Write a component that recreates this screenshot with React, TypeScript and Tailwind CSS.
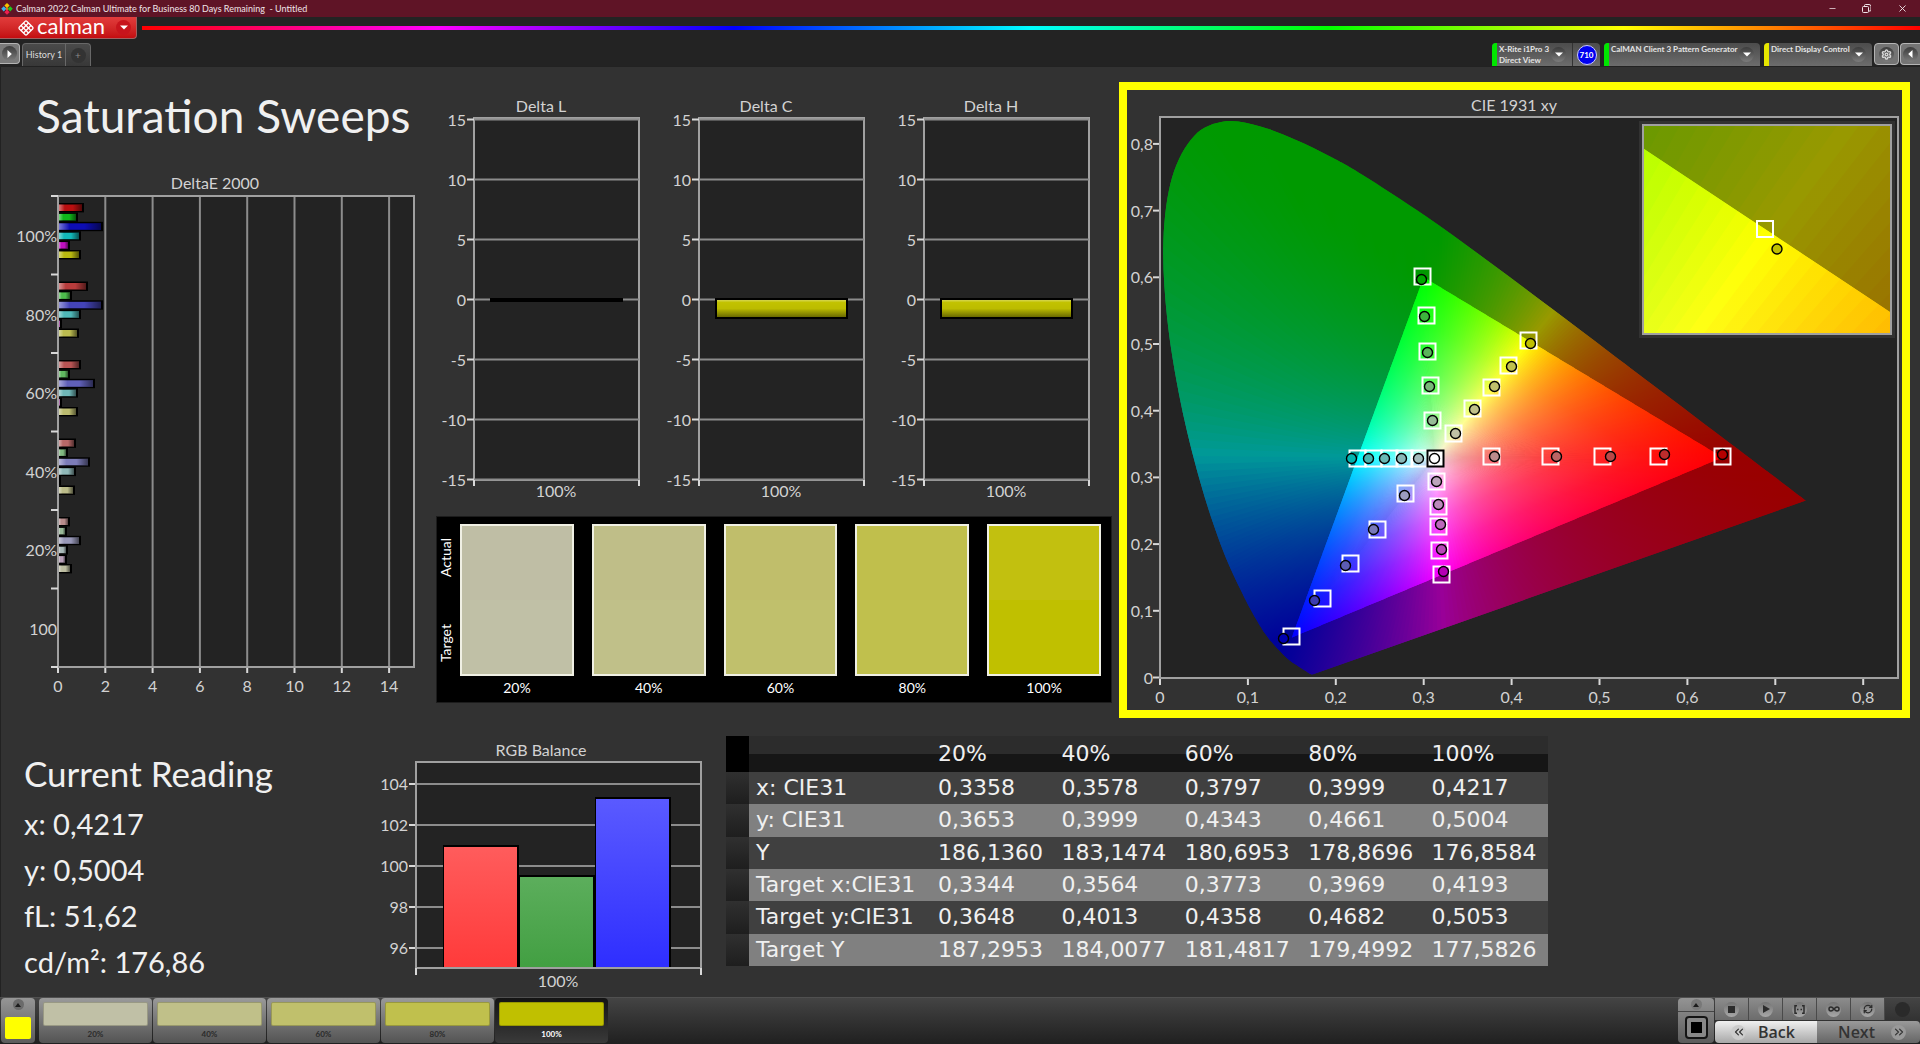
import { ChevronsLeft, ChevronsRight, Infinity as InfinityIcon, Minus, RefreshCw, Settings, X } from "lucide-react";
import { useId, useMemo } from "react";
import type { ReactNode } from "react";

type Point = [number, number];

const LEVELS = ["20%", "40%", "60%", "80%", "100%"];
const SWATCHES = ["#c0c0a6", "#c0c089", "#c0c06c", "#c0c04d", "#c0c000"];
const MEASURED = ["#bfbea5", "#bfbe88", "#c0be6b", "#c0bf4c", "#c2c00f"];

const TABLE_ROWS = [
  { label: "x: CIE31", values: ["0,3358", "0,3578", "0,3797", "0,3999", "0,4217"] },
  { label: "y: CIE31", values: ["0,3653", "0,3999", "0,4343", "0,4661", "0,5004"] },
  { label: "Y", values: ["186,1360", "183,1474", "180,6953", "178,8696", "176,8584"] },
  { label: "Target x:CIE31", values: ["0,3344", "0,3564", "0,3773", "0,3969", "0,4193"] },
  { label: "Target y:CIE31", values: ["0,3648", "0,4013", "0,4358", "0,4682", "0,5053"] },
  { label: "Target Y", values: ["187,2953", "184,0077", "181,4817", "179,4992", "177,5826"] },
];

const DELTA_E = [
  {
    label: "100%",
    widths: [25, 19, 44, 22, 11, 22],
    colors: ["#b80f10", "#0fb81a", "#0d0db4", "#12b8b8", "#c010c0", "#b8b810"],
  },
  {
    label: "80%",
    widths: [29, 13, 44, 22, 3, 20],
    colors: ["#b83c3c", "#4cbc4c", "#4444b8", "#50b8b8", "#b060b0", "#bcbc50"],
  },
  {
    label: "60%",
    widths: [22, 11, 36, 19, 3, 19],
    colors: ["#b85454", "#60b860", "#6060b8", "#70b8b8", "#b070b0", "#bcbc70"],
  },
  {
    label: "40%",
    widths: [17, 9, 31, 17, 2, 16],
    colors: ["#b86868", "#80b880", "#7c7cb8", "#90b8b8", "#000000", "#bcbc8a"],
  },
  {
    label: "20%",
    widths: [11, 8, 22, 9, 8, 13],
    colors: ["#b88c8c", "#98b898", "#9898b8", "#a8b8b8", "#b8a0b8", "#bcbca0"],
  },
];

/* ---------- Chromaticity maths ---------- */

const WHITE: Point = [0.3127, 0.329];
const RED: Point = [0.64, 0.33];
const GREEN: Point = [0.3, 0.6];
const BLUE: Point = [0.15, 0.06];

const LOCUS: Point[] = [
  [0.1741, 0.005], [0.1714, 0.0051], [0.1644, 0.0109], [0.1566, 0.0177], [0.144, 0.0297],
  [0.1241, 0.0578], [0.1096, 0.0868], [0.0913, 0.1327], [0.0687, 0.2007], [0.0454, 0.295],
  [0.0235, 0.4127], [0.0082, 0.5384], [0.0039, 0.6548], [0.0139, 0.7502], [0.0389, 0.812],
  [0.0743, 0.8338], [0.1142, 0.8262], [0.1547, 0.8059], [0.1929, 0.7816], [0.2296, 0.7543],
  [0.3016, 0.6923], [0.3731, 0.6245], [0.4441, 0.5547], [0.5125, 0.4866], [0.5752, 0.4242],
  [0.627, 0.3725], [0.6658, 0.334], [0.6915, 0.3083], [0.719, 0.2809], [0.7347, 0.2653],
];

const toPlot = ([x, y]: Point): Point => [1160 + x * 879, 677.5 - y * 667];

const mix = (a: Point, b: Point, t: number): Point => [a[0] + (b[0] - a[0]) * t, a[1] + (b[1] - a[1]) * t];

const xyToColor = ([x, y]: Point, level = 1) => {
  const z = 1 - x - y;
  const rgb = [
    3.2406 * x - 1.5372 * y - 0.4986 * z,
    -0.9689 * x + 1.8758 * y + 0.0415 * z,
    0.0557 * x - 0.204 * y + 1.057 * z,
  ].map((v) => Math.max(0, v));
  const peak = Math.max(...rgb, 0.0001);
  return `rgb(${rgb.map((v) => Math.round((255 * level * v) / peak)).join(",")})`;
};

const locusPath = () => {
  const pts = LOCUS.map(toPlot);
  let d = `M${pts[0].join(" ")}`;
  for (let i = 0; i < pts.length - 1; i++) {
    const p0 = pts[Math.max(0, i - 1)];
    const p1 = pts[i];
    const p2 = pts[i + 1];
    const p3 = pts[Math.min(pts.length - 1, i + 2)];
    d += `C${p1[0] + (p2[0] - p0[0]) / 6} ${p1[1] + (p2[1] - p0[1]) / 6} ${p2[0] - (p3[0] - p1[0]) / 6} ${
      p2[1] - (p3[1] - p1[1]) / 6
    } ${p2[0]} ${p2[1]}`;
  }
  return `${d}Z`;
};

const EDGE_STEPS = 140;
const REACH = 5;
const INNER_STOPS = [0, 0.1, 0.2, 0.35, 0.5, 0.75, 1];
const OUTER_STOPS = [1, 1.25, 1.5, 1.75, 2, 2.5, 3, 4, 5];

const buildWedges = () => {
  const ring: Point[] = [];
  const corners = [GREEN, RED, BLUE];
  corners.forEach((corner, i) => {
    const next = corners[(i + 1) % 3];
    for (let s = 0; s < EDGE_STEPS; s++) ring.push(mix(corner, next, s / EDGE_STEPS));
  });
  // each wedge reaches over the next one, so that no seams show
  return ring.map((p, i) => ({
    edge: [p, ring[(i + 1) % ring.length], ring[(i + 2) % ring.length]],
    inner: INNER_STOPS.map((t) => ({ offset: t, color: xyToColor(mix(WHITE, p, t)) })),
    outer: OUTER_STOPS.map((t) => ({ offset: t / REACH, color: xyToColor(mix(WHITE, p, t), 0.6) })),
  }));
};

/* ---------- Marker positions on the CIE chart ---------- */

const TARGETS: Point[] = [
  [1422, 276], [1426, 315], [1427, 351], [1430, 385], [1432, 420],
  [1528, 340], [1508, 365], [1491, 387], [1472, 408], [1453, 433],
  [1357, 458], [1373, 458], [1389, 458], [1404, 458], [1419, 458],
  [1491, 456], [1550, 456], [1602, 456], [1658, 456], [1722, 456],
  [1436, 481], [1438, 506], [1438, 526], [1439, 550], [1441, 574],
  [1405, 493], [1377, 529], [1350, 563], [1322, 598], [1291, 636],
];

const READINGS: { at: Point; fill: string }[] = [
  { at: [1421, 279], fill: "#00a800" }, { at: [1424, 316], fill: "#3cb43c" }, { at: [1427, 352], fill: "#5ab45a" },
  { at: [1429, 386], fill: "#78b878" }, { at: [1432, 420], fill: "#96bc96" },
  { at: [1530, 343], fill: "#c0c000" }, { at: [1511, 366], fill: "#c0c04d" }, { at: [1494, 386], fill: "#c0c06c" },
  { at: [1474, 409], fill: "#c0c089" }, { at: [1455, 433], fill: "#c0c0a6" },
  { at: [1351, 458], fill: "#00b4b0" }, { at: [1368, 458], fill: "#48b4b0" }, { at: [1384, 458], fill: "#68b8b4" },
  { at: [1401, 458], fill: "#88b8b8" }, { at: [1418, 458], fill: "#a4bcbc" },
  { at: [1434, 458], fill: "#ffffff" },
  { at: [1494, 456], fill: "#bc8c8c" }, { at: [1556, 456], fill: "#bc6464" }, { at: [1610, 456], fill: "#bc4848" },
  { at: [1664, 454], fill: "#bc2c2c" }, { at: [1722, 454], fill: "#b40000" },
  { at: [1436, 481], fill: "#bca4bc" }, { at: [1438, 504], fill: "#bc88bc" }, { at: [1440, 524], fill: "#bc68bc" },
  { at: [1441, 549], fill: "#b848b8" }, { at: [1443, 571], fill: "#b400b4" },
  { at: [1404, 495], fill: "#9c9cc0" }, { at: [1373, 529], fill: "#7878b8" }, { at: [1345, 565], fill: "#5c5cb4" },
  { at: [1314, 600], fill: "#3c3cb0" }, { at: [1283, 638], fill: "#0000b0" },
];

/* ---------- Charts ---------- */

const LABEL = "fill-[#d2d2d2] text-[16px]";

function DeltaEChart() {
  const shade = useId();
  const top = 196;
  const step = 78.5;
  return (
    <svg viewBox="0 143 429 567" className="block w-full" role="img" aria-label="DeltaE 2000">
      <defs>
        <linearGradient id={shade}>
          <stop offset="0" stopColor="#fff" stopOpacity="0.45" />
          <stop offset="0.25" stopColor="#fff" stopOpacity="0" />
          <stop offset="0.6" stopColor="#000" stopOpacity="0" />
          <stop offset="1" stopColor="#000" stopOpacity="0.55" />
        </linearGradient>
      </defs>
      <text x="215" y="189" textAnchor="middle" className={LABEL}>
        DeltaE 2000
      </text>
      <rect x="58" y={top} width="356" height="471" fill="#232323" />
      {[2, 4, 6, 8, 10, 12, 14].map((v) => (
        <line key={v} x1={58 + v * 23.65} x2={58 + v * 23.65} y1={top} y2="667" stroke="#8c8c8c" strokeWidth="2" />
      ))}
      {[0, 2, 4, 6, 8, 10, 12, 14].map((v) => (
        <g key={v}>
          <line x1={58 + v * 23.65} x2={58 + v * 23.65} y1="667" y2="673" stroke="#d8d8d8" strokeWidth="2" />
          <text x={58 + v * 23.65} y="692" textAnchor="middle" className={LABEL}>
            {v}
          </text>
        </g>
      ))}
      <rect x="58" y={top} width="356" height="471" fill="none" stroke="#a0a0a0" strokeWidth="2" />
      {[0, 1, 2, 3, 4, 5, 6].map((i) => (
        <line key={i} x1="51" x2="58" y1={top + i * step} y2={top + i * step} stroke="#d8d8d8" strokeWidth="2" />
      ))}
      {DELTA_E.map((group, g) => (
        <g key={group.label}>
          <text x="57" y={top + g * step + 46} textAnchor="end" className={LABEL}>
            {group.label}
          </text>
          {group.widths.map((w, i) => {
            const y = top + g * step + 7 + i * 9.4;
            return (
              <g key={i}>
                <rect x="59" y={y} width={w} height="9.4" fill="#000" />
                <rect x="59" y={y + 1.5} width={Math.max(1, w - 2)} height="6.5" fill={group.colors[i]} />
                <rect x="59" y={y + 1.5} width={Math.max(1, w - 2)} height="6.5" fill={`url(#${shade})`} />
              </g>
            );
          })}
        </g>
      ))}
      <text x="57" y={top + 5 * step + 46} textAnchor="end" className={LABEL}>
        100
      </text>
    </svg>
  );
}

function DeltaChart({ title, value }: { title: string; value: number }) {
  const shade = useId();
  const yOf = (v: number) => 299.5 - v * 12;
  return (
    <svg viewBox="0 90 225 415" className="block w-full" role="img" aria-label={title}>
      <defs>
        <linearGradient id={shade} x2="0" y2="1">
          <stop offset="0" stopColor="#d6d650" />
          <stop offset="0.15" stopColor="#c2c200" />
          <stop offset="0.5" stopColor="#bcbc00" />
          <stop offset="1" stopColor="#6a6a00" />
        </linearGradient>
      </defs>
      <text x="112" y="112" textAnchor="middle" className={LABEL}>
        {title}
      </text>
      <rect x="45" y="118" width="165" height="362" fill="#232323" stroke="#a0a0a0" strokeWidth="2" />
      {[15, 10, 5, 0, -5, -10, -15].map((v) => (
        <g key={v}>
          <line x1="45" x2="210" y1={yOf(v)} y2={yOf(v)} stroke="#8c8c8c" strokeWidth="2" />
          <line x1="38" x2="45" y1={yOf(v)} y2={yOf(v)} stroke="#d8d8d8" strokeWidth="2" />
          <text x="37" y={yOf(v) + 6} textAnchor="end" className={LABEL}>
            {v}
          </text>
        </g>
      ))}
      <line x1="45" x2="45" y1="480" y2="486" stroke="#d8d8d8" strokeWidth="2" />
      <line x1="210" x2="210" y1="480" y2="486" stroke="#d8d8d8" strokeWidth="2" />
      <rect x="61" y="298" width="133" height={Math.max(4, -value * 14)} fill="#000" />
      {value < 0 && <rect x="63" y="300" width="129" height={-value * 14 - 4} fill={`url(#${shade})`} />}
      <text x="127" y="497" textAnchor="middle" className={LABEL}>
        100%
      </text>
    </svg>
  );
}

function RgbBalanceChart() {
  const id = useId();
  const bars = [
    { x: 443, y: 845, from: "#ff5c5c", to: "#ff3a3a" },
    { x: 519, y: 875, from: "#5cae5c", to: "#429f42" },
    { x: 595, y: 797, from: "#5a5aff", to: "#2e2eff" },
  ];
  return (
    <svg viewBox="380 735 345 262" className="block w-full" role="img" aria-label="RGB Balance">
      <defs>
        {bars.map((bar, i) => (
          <linearGradient key={i} id={`${id}${i}`} x2="0" y2="1">
            <stop offset="0" stopColor={bar.from} />
            <stop offset="1" stopColor={bar.to} />
          </linearGradient>
        ))}
      </defs>
      <text x="541" y="756" textAnchor="middle" className={LABEL}>
        RGB Balance
      </text>
      <rect x="416" y="762" width="285" height="206" fill="#232323" />
      {[104, 102, 100, 98, 96].map((v, i) => (
        <g key={v}>
          <line x1="416" x2="701" y1={784 + i * 41} y2={784 + i * 41} stroke="#8c8c8c" strokeWidth="2" />
          <line x1="409" x2="416" y1={784 + i * 41} y2={784 + i * 41} stroke="#d8d8d8" strokeWidth="2" />
          <text x="408" y={790 + i * 41} textAnchor="end" className={LABEL}>
            {v}
          </text>
        </g>
      ))}
      {bars.map((bar, i) => (
        <g key={i}>
          <rect x={bar.x} y={bar.y} width="76" height={968 - bar.y} fill="#000" />
          <rect x={bar.x + 1} y={bar.y + 2} width="73" height={966 - bar.y} fill={`url(#${id}${i})`} />
        </g>
      ))}
      <rect x="416" y="762" width="285" height="206" fill="none" stroke="#a0a0a0" strokeWidth="2" />
      <line x1="416" x2="416" y1="968" y2="975" stroke="#d8d8d8" strokeWidth="2" />
      <line x1="701" x2="701" y1="968" y2="975" stroke="#d8d8d8" strokeWidth="2" />
      <text x="558" y="987" textAnchor="middle" className={LABEL}>
        100%
      </text>
    </svg>
  );
}

function CieChart() {
  const wedges = useMemo(buildWedges, []);
  const locus = useMemo(locusPath, []);
  const [wx, wy] = toPlot(WHITE);
  const ticks = [0, 1, 2, 3, 4, 5, 6, 7, 8];
  const [tx, ty] = toPlot([0.4193, 0.5053]);

  return (
    <svg viewBox="1127 90 775 620" className="block w-full" role="img" aria-label="CIE 1931 xy">
      <defs>
        {wedges.map((w, i) => {
          const [x2, y2] = toPlot(w.edge[0]);
          const [fx, fy] = toPlot(mix(WHITE, w.edge[0], REACH));
          return (
            <g key={i}>
              <linearGradient id={`in${i}`} gradientUnits="userSpaceOnUse" x1={wx} y1={wy} x2={x2} y2={y2}>
                {w.inner.map((s) => (
                  <stop key={s.offset} offset={s.offset} stopColor={s.color} />
                ))}
              </linearGradient>
              <linearGradient id={`out${i}`} gradientUnits="userSpaceOnUse" x1={wx} y1={wy} x2={fx} y2={fy}>
                {w.outer.map((s) => (
                  <stop key={s.offset} offset={s.offset} stopColor={s.color} />
                ))}
              </linearGradient>
            </g>
          );
        })}
        <clipPath id="locus">
          <path d={locus} />
        </clipPath>
        <clipPath id="inset">
          <rect x="1643" y="125" width="248" height="209" />
        </clipPath>
        <g id="diagram">
          {wedges.map((w, i) => {
            const far = w.edge.map((p) => toPlot(mix(WHITE, p, REACH)).join(","));
            return <polygon key={i} points={`${wx},${wy} ${far.join(" ")}`} fill={`url(#out${i})`} />;
          })}
          {wedges.map((w, i) => (
            <polygon
              key={i}
              points={`${wx},${wy} ${w.edge.map((p) => toPlot(p).join(",")).join(" ")}`}
              fill={`url(#in${i})`}
            />
          ))}
        </g>
      </defs>
      <text x="1514" y="111" textAnchor="middle" className={LABEL}>
        CIE 1931 xy
      </text>
      <rect x="1160" y="117" width="738" height="561" fill="#232323" stroke="#a0a0a0" strokeWidth="2" />
      {ticks.map((t) => {
        const [x] = toPlot([t / 10, 0]);
        const [, y] = toPlot([0, t / 10]);
        const label = t === 0 ? "0" : `0,${t}`;
        return (
          <g key={t}>
            <line x1={x} x2={x} y1="679" y2="685" stroke="#d8d8d8" strokeWidth="2" />
            <line x1="1153" x2="1159" y1={y} y2={y} stroke="#d8d8d8" strokeWidth="2" />
            <text x={x} y="703" textAnchor="middle" className={LABEL}>
              {label}
            </text>
            <text x="1153" y={y + 6} textAnchor="end" className={LABEL}>
              {label}
            </text>
          </g>
        );
      })}
      <g clipPath="url(#locus)">
        <use href="#diagram" />
      </g>
      <g transform="translate(0.5 0.5)">
        {TARGETS.map(([x, y]) => (
          <rect key={`${x}-${y}`} x={x - 8} y={y - 8} width="16" height="16" fill="none" stroke="#fff" strokeWidth="2" />
        ))}
        <rect x="1427" y="450" width="16" height="16" fill="#fff" stroke="#000" strokeWidth="2" />
        {READINGS.map(({ at: [x, y], fill }) => (
          <circle key={`${x}-${y}`} cx={x} cy={y} r="5" fill={fill} stroke="#000" strokeWidth="1.4" />
        ))}
      </g>

      {/* Magnified view round the selected target */}
      <rect x="1639" y="121" width="256" height="217" fill="#323232" />
      <g clipPath="url(#inset)">
        <g transform={`translate(1765 229) scale(6 6.6) translate(${-tx} ${-ty})`}>
          <use href="#diagram" />
        </g>
      </g>
      <rect x="1643" y="125" width="248" height="209" fill="none" stroke="#a0a0a0" strokeWidth="2" />
      <rect x="1757" y="221" width="16" height="16" fill="none" stroke="#fff" strokeWidth="2" />
      <circle cx="1777" cy="249" r="5" fill="#c0c000" stroke="#000" strokeWidth="1.4" />
    </svg>
  );
}

/* ---------- Chrome ---------- */

function RoundMark({ children, className = "" }: { children?: ReactNode; className?: string }) {
  return (
    <span
      className={`flex size-[15px] shrink-0 items-center justify-center rounded-full bg-linear-to-b from-[#3c3c3c] to-[#7c7c7c] ${className}`}
    >
      {children}
    </span>
  );
}

function Caret() {
  return (
    <svg viewBox="0 0 8 5" className="w-2">
      <path d="M0 0.5h8L4 4.5z" fill="#fff" />
    </svg>
  );
}

function DeviceTab({ lines, bar, className }: { lines: string[]; bar: string; className: string }) {
  return (
    <button
      type="button"
      aria-haspopup="menu"
      className={`flex h-full items-stretch overflow-hidden rounded-t-sm bg-linear-to-b from-[#4c4c4c] to-[#6c6c6c] text-left ${className}`}
    >
      <span className={`w-[5px] ${bar}`} />
      <span className="flex-1 pt-px pl-[2px] text-[8px] leading-[11px] font-bold whitespace-nowrap text-[#e4e4e4]">
        {lines.map((line) => (
          <span key={line} className="block">
            {line}
          </span>
        ))}
      </span>
      <RoundMark className="mr-[6px] self-center">
        <Caret />
      </RoundMark>
    </button>
  );
}

function TitleBar() {
  return (
    <div className="flex h-[17px] items-center bg-[#5f1426] pl-px text-[#f0e4e8]">
      <svg viewBox="0 0 12 12" className="size-3">
        <path d="M6 0l2.6 2.6L6 5.2 3.4 2.6z" fill="#f5c400" />
        <path d="M2.8 3.2l2.6 2.6-2.6 2.6L.2 5.8z" fill="#3ab4f0" />
        <path d="M9.2 3.2l2.6 2.6-2.6 2.6-2.6-2.6z" fill="#1ec81e" />
        <path d="M6 6.6l2.6 2.6L6 11.8 3.4 9.2z" fill="#f01e50" />
        <path d="M6 4.6l1.4 1.4L6 7.4 4.6 6z" fill="#f07828" />
      </svg>
      <span className="ml-[3px] text-[9px] leading-[17px] whitespace-pre">
        {"Calman 2022 Calman Ultimate for Business 80 Days Remaining  - Untitled"}
      </span>
      <div className="ml-auto flex items-center">
        <button type="button" aria-label="Minimize" className="flex w-8 justify-center">
          <Minus size={9} strokeWidth={2} />
        </button>
        <button type="button" aria-label="Restore" className="flex w-9 justify-center">
          <svg viewBox="0 0 9 9" className="size-[9px]" fill="none" stroke="currentColor" strokeWidth="1">
            <rect x="0.5" y="2.5" width="6" height="6" rx="1" />
            <path d="M2.5 2.5v-1a1 1 0 0 1 1-1h3.500a2 2 0 0 1 2 2v3.500a1 1 0 0 1-1 1h-1" />
          </svg>
        </button>
        <button type="button" aria-label="Close" className="flex w-9 justify-center">
          <X size={11} strokeWidth={2} />
        </button>
      </div>
    </div>
  );
}

function Logo() {
  const cells: Point[] = [
    [9, 4], [6.5, 6.5], [11.5, 6.5], [4, 9], [9, 9], [14, 9], [6.5, 11.5], [11.5, 11.5], [9, 14],
  ];
  return (
    <button
      type="button"
      aria-haspopup="menu"
      className="flex h-[22px] w-[137px] items-center rounded-br-sm border-r border-b border-[#a06060] bg-linear-to-b from-[#e23c3c] to-[#c40c10] pl-[17px] text-white"
    >
      <svg viewBox="0 0 18 18" className="size-[18px]">
        <rect x="3" y="3" width="12" height="12" rx="2" fill="#fff" transform="rotate(45 9 9)" />
        {cells.map(([x, y]) => (
          <rect
            key={`${x}-${y}`}
            x={x - 1.1}
            y={y - 1.1}
            width="2.2"
            height="2.2"
            rx="0.4"
            fill="#d42428"
            transform={`rotate(45 ${x} ${y})`}
          />
        ))}
      </svg>
      <span className="ml-[2px] pb-[3px] text-[22px] leading-[20px]">calman</span>
      <span className="mr-[5px] ml-auto flex size-[15px] items-center justify-center rounded-full bg-[#c8141c]">
        <Caret />
      </span>
    </button>
  );
}

function Header() {
  return (
    <header className="h-[49px] bg-[#232323]">
      <div className="flex items-center">
        <Logo />
        <div className="ml-[5px] h-1 flex-1 bg-[linear-gradient(to_right,#f00,#f0f,#00f,#0ff,#0f0,#ff0,#f00)]" />
      </div>
      <div className="flex h-[27px] pt-1">
        <button
          type="button"
          aria-label="Show panel"
          className="flex h-[21px] w-5 items-center justify-center rounded-r-sm border border-l-0 border-[#b4b4b4] bg-[#7a7a7a]"
        >
          <RoundMark>
            <svg viewBox="0 0 5 8" className="h-2">
              <path d="M0.5 0v8L4.8 4z" fill="#fff" />
            </svg>
          </RoundMark>
        </button>
        <div className="ml-[2px] flex h-full w-[69px] rounded-t-sm border border-b-0 border-[#686868] bg-linear-to-b from-[#4a4a4a] to-[#383838]">
          <button type="button" className="w-[43px] border-r border-[#686868] text-[9px] text-[#dcdcdc]">
            History 1
          </button>
          <button type="button" aria-label="Add tab" className="flex flex-1 items-center justify-center">
            <span className="flex size-[15px] items-center justify-center rounded-full bg-[#333] text-[10px] leading-[10px] text-[#888]">
              +
            </span>
          </button>
        </div>
        <div className="ml-auto flex h-full">
          <DeviceTab lines={["X-Rite i1Pro 3", "Direct View"]} bar="bg-[#00e600]" className="w-[80px] rounded-r-none" />
          <div className="flex h-full w-[28px] items-center justify-center rounded-tr-sm border-l border-[#333] bg-linear-to-b from-[#4c4c4c] to-[#6c6c6c]">
            <span className="flex size-5 items-center justify-center rounded-full border border-[#c8c8ff] bg-[#0000f0] text-[8px] font-bold text-white">
              710
            </span>
          </div>
          <DeviceTab lines={["CalMAN Client 3 Pattern Generator"]} bar="bg-[#00e600]" className="ml-1 w-[156px]" />
          <DeviceTab lines={["Direct Display Control"]} bar="bg-[#e6e600]" className="ml-1 w-[108px]" />
          <button
            type="button"
            aria-label="Settings"
            className="ml-[2px] flex h-[22px] w-[25px] items-center justify-center rounded-sm border border-[#b4b4b4] bg-[#747474]"
          >
            <RoundMark>
              <Settings size={11} strokeWidth={3} color="#d8d8d8" />
            </RoundMark>
          </button>
          <button
            type="button"
            aria-label="Hide panel"
            className="ml-px flex h-[22px] w-5 items-center justify-center rounded-l-sm border border-r-0 border-[#b4b4b4] bg-[#747474]"
          >
            <RoundMark>
              <svg viewBox="0 0 5 8" className="h-2">
                <path d="M4.5 0v8L0.2 4z" fill="#fff" />
              </svg>
            </RoundMark>
          </button>
        </div>
      </div>
    </header>
  );
}

function SwatchPanel() {
  return (
    <div className="mx-[7px] mt-[11px] flex h-[187px] border border-[#1c1c1c] bg-black pt-[7px] pr-[10px] text-[14px] text-white">
      <div className="flex h-[152px] w-[23px] flex-col items-start justify-between py-[14px]">
        <span className="rotate-180 leading-[18px] [writing-mode:vertical-rl]">Actual</span>
        <span className="rotate-180 leading-[18px] [writing-mode:vertical-rl]">Target</span>
      </div>
      <div className="grid flex-1 grid-cols-5 gap-[18px]">
        {LEVELS.map((level, i) => (
          <div key={level} className="text-center">
            <div className="flex h-[152px] flex-col border-2 border-[#f0f0e4]">
              <div className="flex-1" style={{ backgroundColor: MEASURED[i] }} />
              <div className="flex-1" style={{ backgroundColor: SWATCHES[i] }} />
            </div>
            <div className="mt-[3px] leading-[18px]">{level}</div>
          </div>
        ))}
      </div>
    </div>
  );
}

function ReadingsTable() {
  return (
    <table className="h-[230px] w-[822px] table-fixed border-collapse text-left font-['DejaVu_Sans','Noto_Sans',sans-serif] text-[22px] leading-[26px] text-[#f0f0f0]">
      <thead>
        <tr className="h-9 bg-[linear-gradient(#2c2c2c_50%,#161616_50%)]">
          <th className="w-[23px] bg-black" />
          <th className="w-[182px]" />
          {LEVELS.map((level) => (
            <th key={level} scope="col" className="pl-[7px] font-normal">
              {level}
            </th>
          ))}
        </tr>
      </thead>
      <tbody>
        {TABLE_ROWS.map((row) => (
          <tr key={row.label} className="odd:bg-[#404040] even:bg-[#808080]">
            <td className="bg-linear-to-b from-[#303030] to-[#1e1e1e]" />
            <th scope="row" className="pl-[7px] font-normal whitespace-nowrap">
              {row.label}
            </th>
            {row.values.map((value) => (
              <td key={value} className="pl-[7px]">
                {value}
              </td>
            ))}
          </tr>
        ))}
      </tbody>
    </table>
  );
}

function TransportButton({ label, children }: { label: string; children: ReactNode }) {
  return (
    <button
      type="button"
      aria-label={label}
      className="flex w-[34px] items-center justify-center border-r border-[#4a4a4a] bg-linear-to-b from-[#8c8c8c] to-[#6c6c6c]"
    >
      <span className="flex size-[15px] items-center justify-center rounded-full bg-linear-to-b from-[#747474] to-[#a8a8a8] text-[#2c2c2c]">
        {children}
      </span>
    </button>
  );
}

function Footer() {
  return (
    <footer className="flex h-[47px] border-t border-[#505050] bg-linear-to-b from-[#444] to-[#202020] pb-px">
      <button
        type="button"
        aria-label="Pattern colour"
        className="ml-px flex w-[34px] flex-col items-center justify-between rounded-sm bg-linear-to-b from-[#969696] to-[#5c5c5c] pt-px pb-1"
      >
        <span className="flex size-[11px] items-center justify-center rounded-full bg-[#6a6a6a]">
          <svg viewBox="0 0 6 4" className="w-[6px]">
            <path d="M3 0l3 4H0z" fill="#1c1c1c" />
          </svg>
        </span>
        <span className="h-[22px] w-[26px] rounded-xs bg-[#ffff00]" />
      </button>
      <div className="ml-1 flex gap-px">
        {LEVELS.map((level, i) => (
          <button
            key={level}
            type="button"
            className={`flex w-[113px] flex-col items-center rounded-sm px-1 pt-1 text-[8px] leading-[17px] font-bold ${
              level === "100%"
                ? "bg-linear-to-b from-[#141414] to-[#3a3a3a] text-white"
                : "bg-linear-to-b from-[#9a9a9a] to-[#545454] text-[#2a2a2a]"
            }`}
          >
            <span
              className="h-[27px] w-full rounded-xs border border-black/20"
              style={{ backgroundColor: SWATCHES[i] }}
            />
            {level}
          </button>
        ))}
      </div>

      <div className="ml-auto flex w-9 flex-col rounded-sm bg-linear-to-b from-[#949494] to-[#5c5c5c]">
        <button type="button" aria-label="Expand" className="flex h-[14px] items-center justify-center border-b border-[#444]">
          <span className="flex size-[11px] items-center justify-center rounded-full bg-[#787878]">
            <svg viewBox="0 0 6 4" className="w-[6px]">
              <path d="M3 0l3 4H0z" fill="#1c1c1c" />
            </svg>
          </span>
        </button>
        <button type="button" aria-label="Pattern window" className="flex flex-1 items-center justify-center">
          <span className="flex size-[23px] items-center justify-center rounded-sm border-2 border-[#141414] bg-[#888]">
            <span className="size-[11px] bg-black" />
          </span>
        </button>
      </div>
      <div className="ml-px flex w-[205px] flex-col">
        <div className="flex h-[22px]">
          <TransportButton label="Stop">
            <span className="size-[7px] bg-current" />
          </TransportButton>
          <TransportButton label="Play">
            <svg viewBox="0 0 7 8" className="ml-px h-2">
              <path d="M0 0v8l7-4z" fill="currentColor" />
            </svg>
          </TransportButton>
          <TransportButton label="Range">
            <svg viewBox="0 0 11 9" className="h-[9px] w-[11px]" fill="none" stroke="currentColor" strokeWidth="1.5">
              <path d="M3 0.8H1v7.4h2M8 0.8h2v7.4H8M3 4.5h1.5M6.5 4.5H8" />
            </svg>
          </TransportButton>
          <TransportButton label="Loop">
            <InfinityIcon size={12} strokeWidth={3} />
          </TransportButton>
          <TransportButton label="Refresh">
            <RefreshCw size={10} strokeWidth={3} />
          </TransportButton>
          <span className="flex flex-1 items-center justify-center">
            <span className="size-[15px] rounded-full bg-[#2a2a2a]" />
          </span>
        </div>
        <div className="mt-px flex flex-1 font-['Open_Sans','Noto_Sans',sans-serif] text-[16px] leading-[22px] font-semibold text-[#333]">
          <button
            type="button"
            className="flex w-[102px] items-center rounded-l-sm bg-linear-to-b from-[#f0f0f0] to-[#a8a8a8] pl-4"
          >
            <span className="mr-3 flex size-[15px] items-center justify-center rounded-full bg-[#ccc]">
              <ChevronsLeft size={14} />
            </span>
            Back
          </button>
          <button
            type="button"
            className="flex flex-1 items-center justify-end rounded-r-sm bg-linear-to-b from-[#9a9a9a] to-[#666] pr-[14px]"
          >
            Next
            <span className="ml-4 flex size-[15px] items-center justify-center rounded-full bg-[#999]">
              <ChevronsRight size={14} />
            </span>
          </button>
        </div>
      </div>
    </footer>
  );
}

export default function App() {
  return (
    <div className="flex min-h-screen flex-col bg-[#323232] font-['Lato','Noto_Sans',sans-serif]">
      <TitleBar />
      <Header />
      <main className="flex-1 text-[#f0f0f0] shadow-[inset_1px_1px_0_#222]">
        <section className="grid grid-cols-[429fr_690fr_801fr]">
          <div>
            <h1 className="mt-[23px] pl-9 text-[46px] leading-[54px] whitespace-nowrap">Saturation Sweeps</h1>
            <DeltaEChart />
          </div>
          <div className="pt-6">
            <div className="grid grid-cols-3 pr-[15px]">
              <DeltaChart title="Delta L" value={0} />
              <DeltaChart title="Delta C" value={-1.5} />
              <DeltaChart title="Delta H" value={-1.5} />
            </div>
            <SwatchPanel />
          </div>
          <div className="pt-4 pr-[10px]">
            <div className="border-8 border-[#ffff00]">
              <CieChart />
            </div>
          </div>
        </section>

        <section className="grid grid-cols-[380fr_345fr_1195fr]">
          <div className="pt-[35px] pl-6">
            <h2 className="text-[35px] leading-10">Current Reading</h2>
            <div className="mt-2 text-[29px] leading-[46px]">
              <p>x: 0,4217</p>
              <p>y: 0,5004</p>
              <p>fL: 51,62</p>
              <p>cd/m²: 176,86</p>
            </div>
          </div>
          <div className="pt-[17px]">
            <RgbBalanceChart />
          </div>
          <div className="pt-[18px] pl-px">
            <ReadingsTable />
          </div>
        </section>
      </main>
      <Footer />
    </div>
  );
}
